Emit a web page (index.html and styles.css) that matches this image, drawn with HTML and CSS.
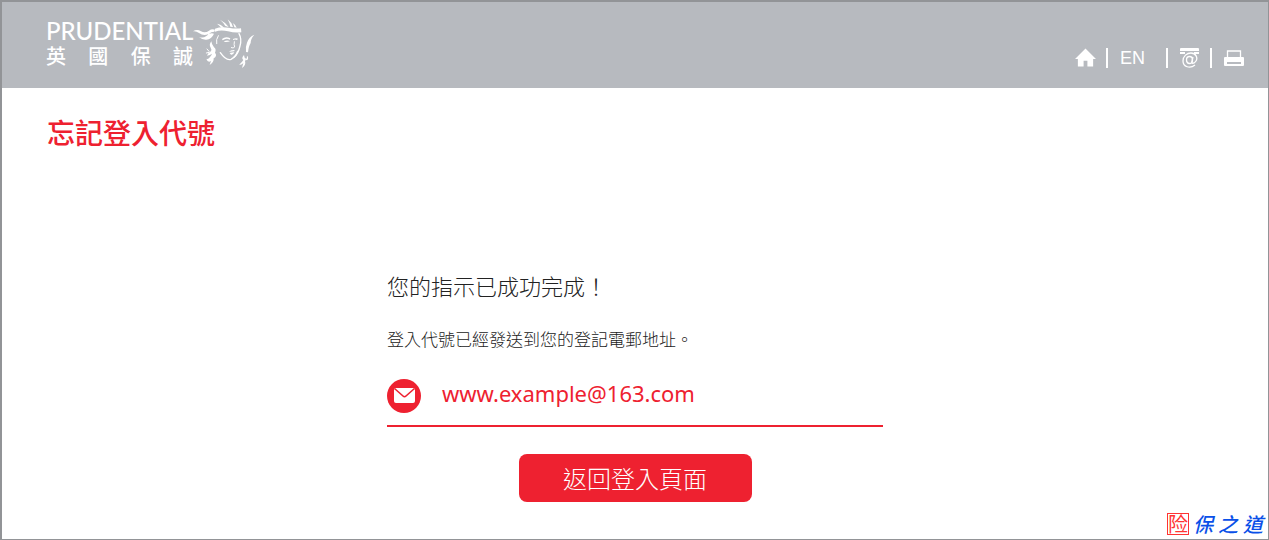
FILE: index.html
```html
<!DOCTYPE html>
<html lang="zh-Hant">
<head>
  <meta charset="UTF-8">
  <meta name="viewport" content="width=device-width, initial-scale=1">
  <title>忘記登入代號</title>
  <link rel="stylesheet" href="styles.css">
</head>
<body>

  <header class="header">
    <a class="logo" href="#">
      <span class="logo-text">
        <span class="logo-en">PRUDENTIAL</span>
        <span class="logo-zh"><span>英</span><span>國</span><span>保</span><span>誠</span></span>
      </span>
      <svg class="logo-face" viewBox="36 28 186 150" aria-hidden="true">
        <g fill="#fff">
          <path d="M36 65 Q48 57 60 65 Q72 72 84 63 Q92 57 102 60 L100 66 Q90 66 84 72 Q94 70 99 72 Q92 88 76 90 Q64 91 54 82 Q66 86 75 80 Q80 77 82 73 Q68 80 54 70 Q45 63 36 65Z"/>
          <path d="M102 57 Q120 50 142 54 Q164 58 180 56 L181 68 Q160 70 141 65 Q120 60 102 66Z"/>
          <path d="M108 42 Q120 43 129 54 L121 54 Q114 46 108 42Z"/>
          <path d="M117 30 Q132 37 143 52 L133 49 Q128 39 117 30Z"/>
          <path d="M140 29 Q151 37 156 52 L148 51 Q146 39 140 29Z"/>
          <path d="M155 40 Q163 43 167 54 L160 53 Q159 45 155 40Z"/>
          <path d="M123 88 Q134 79 148 86 L146 90 Q136 84 125 92Z"/>
          <path d="M156 88 Q165 84 171 87 L168 91 Q162 88 156 91Z"/>
          <path d="M128 96 Q138 89 147 95 Q138 98 128 96Z"/>
          <path d="M144 126 Q150 120 154 122 Q158 119 162 124 Q154 126 144 126Z"/>
          <path d="M146 130 Q154 129 160 128 Q157 136 150 135Z"/>
          <path d="M220 75 Q204 81 198 99 Q193 111 195 127 L201 128 Q203 109 209 100 Q209 87 220 75Z"/>
          <path d="M91 95 Q83 105 89 114 Q94 120 88 126 Q80 131 78 138 Q88 137 93 132 L91 137 Q82 151 76 147 Q80 160 90 154 L86 166 Q99 158 98 146 Q110 139 102 129 Q107 119 99 113 Q92 105 91 95Z"/>
          <path d="M189 136 Q180 145 187 151 Q179 163 174 164 Q181 167 187 160 L183 175 Q196 166 192 154 Q198 147 191 144Z"/>
          <path d="M198 138 Q205 144 198 152 L194 150 Q199 144 198 138Z"/>
        </g>
        <g fill="none" stroke="#fff" stroke-width="3" stroke-linecap="round">
          <path d="M112 78 Q104 90 107 102"/>
          <path d="M160 96 Q158 106 161 112 Q157 117 151 114"/>
          <path d="M174 72 Q183 88 177 109 Q172 132 159 143" stroke-width="4"/>
          <path d="M118 129 Q135 154 150 149 Q164 142 170 125" stroke-width="4"/>
          <path d="M78 118 L84 125 M76 130 L84 128"/>
        </g>
      </svg>
    </a>

    <nav class="nav">
      <a class="nav-item" href="#" aria-label="主頁">
        <svg width="21" height="20" viewBox="0 0 22 20"><path fill="#fff" d="M11 0 L22 11 H19 V19 H13 V13 H9 V19 H3 V11 H0Z"/></svg>
      </a>
      <a class="nav-item nav-lang" href="#">EN</a>
      <a class="nav-item" href="#" aria-label="聯絡我們">
        <svg width="20" height="20" viewBox="0 0 20 20">
          <path fill="#fff" d="M0 1 Q0 0 1 0 H18 Q19 0 19 1 V3 H0Z M0 4 H5 V6 H0Z M14 4 H19 V6 H14Z"/>
          <g fill="none" stroke="#fff" stroke-width="1.3">
            <path d="M15 17 C10 21 3 19 3 13 C3 8 7 5 11 5 C16 5 18 10 16 13 C14 16 11 16 12 13 L13 9"/>
            <ellipse cx="9.500" cy="12" rx="3" ry="3.500"/>
          </g>
        </svg>
      </a>
      <a class="nav-item" href="#" aria-label="列印">
        <svg width="20" height="20" viewBox="0 0 20 20">
          <path fill="none" stroke="#fff" stroke-width="1.300" d="M3.500 9 V3 H16.500 V9"/>
          <path fill="#fff" fill-rule="evenodd" d="M1 9 H19 Q20 9 20 10 V17 Q20 18 19 18 H1 Q0 18 0 17 V10 Q0 9 1 9Z M3 14 V16 H17 V14Z"/>
        </svg>
      </a>
    </nav>
  </header>

  <main class="main">
    <h1 class="title">忘記登入代號</h1>

    <section class="result">
      <h2 class="result-title">您的指示已成功完成！</h2>
      <p class="result-text">登入代號已經發送到您的登記電郵地址。</p>
      <div class="email">
        <svg class="email-icon" width="34" height="34" viewBox="0 0 34 34" aria-hidden="true">
          <circle cx="17" cy="17" r="17" fill="#ee2130"/>
          <rect x="7" y="9" width="21" height="15" rx="2" fill="#fff"/>
          <path d="M7.500 9.500 L16 17 Q17.500 18.500 19 17 L27.500 9.500" fill="none" stroke="#ee2130" stroke-width="1.600"/>
        </svg>
        <span class="email-address">www.example@163.com</span>
      </div>
      <button class="btn" type="button">返回登入頁面</button>
    </section>
  </main>

  <div class="watermark">
    <span class="stamp">险</span>
    <span class="stamp-text"><span>保</span><span>之</span><span>道</span></span>
  </div>

</body>
</html>
```
FILE: styles.css
```css
* { box-sizing: border-box; }
body { margin: 0; min-height: 100vh; position: relative; border: 1px solid #929497; border-width: 2px 1px 1px 2px; background: #fff; color: #222; font-family: "Liberation Sans", "Noto Sans CJK TC", sans-serif; }
a { color: inherit; text-decoration: none; }
svg { display: block; }

.header { display: flex; justify-content: space-between; align-items: flex-start; height: 86px; padding: 17px 24px 0 44px; background: #b7babf; color: #fff; }
.logo { display: flex; }
.logo-text { display: flex; flex-direction: column; width: 147px; }
.logo-en { font: 500 24px/24px Lato, sans-serif; }
.logo-zh { display: flex; justify-content: space-between; font: 500 20px/26px "Noto Sans CJK TC", sans-serif; }
.logo-face { width: 62px; height: 50px; }

.nav { display: flex; align-items: center; margin-top: 29px; }
.nav-item { display: flex; align-items: center; height: 20px; }
.nav-item + .nav-item { margin-left: 10px; padding-left: 12px; border-left: 2px solid #fff; }
.nav .nav-lang { padding-right: 11px; font-size: 18px; }

.main { padding: 26px 45px 36px; }
.title { margin: 0; color: #ee2130; font: 500 28px/36px "Noto Sans CJK TC", sans-serif; }
.result { display: flex; flex-direction: column; max-width: 496px; margin: 119px auto 0; font-family: "Noto Sans CJK TC", sans-serif; }
.result-title { margin: 0; font-weight: 300; font-size: 22px; line-height: 32px; }
.result-text { margin: 26px 0 0; font-weight: 300; font-size: 17px; line-height: 24px; }
.email { display: flex; margin-top: 28px; padding-bottom: 12px; border-bottom: 2px solid #ee2130; color: #ee2130; }
.email-address { margin-left: 21px; font: 22px/28px "Noto Sans", sans-serif; }
.btn { align-self: center; width: 233px; height: 48px; margin-top: 27px; padding: 0; border: 0; border-radius: 8px; background: #ee2130; color: #fff; font: 300 24px/46px "Noto Sans CJK TC", sans-serif; cursor: pointer; }

/* lies over the bottom corner of the page */
.watermark { position: absolute; right: 5px; bottom: 4px; display: flex; align-items: center; gap: 4px; font-family: "Noto Sans CJK SC", sans-serif; }
.stamp { border: 1px solid #f33; color: #f33; font-size: 20px; line-height: 20px; }
.stamp-text { display: flex; gap: 5px; color: #0a50e8; font-size: 20px; font-style: italic; font-weight: 500; line-height: 22px; }
```
